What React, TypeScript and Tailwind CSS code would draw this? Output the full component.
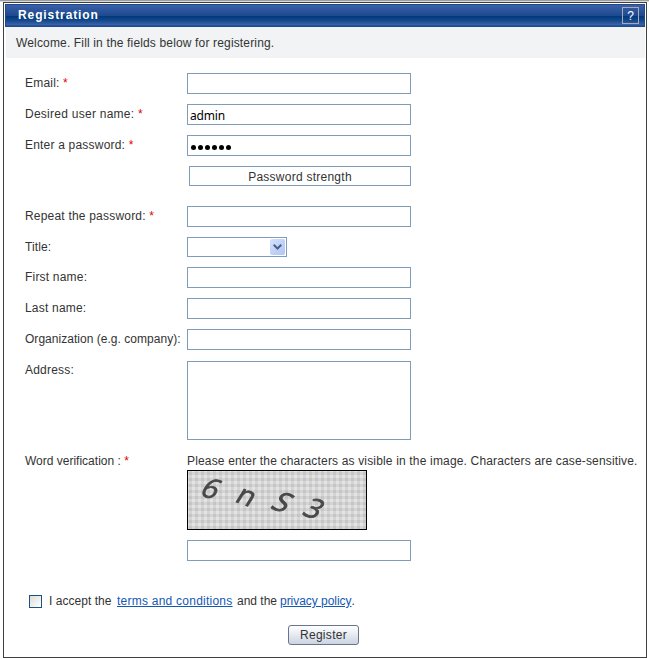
import type { ReactNode } from "react";

function Row({ label, required, height, tracking, children }: {
  label: string;
  required?: boolean;
  height: string;
  tracking: string;
  children?: ReactNode;
}) {
  return (
    <div className={`flex items-start ${height}`}>
      <div className={`w-[162px] shrink-0 whitespace-nowrap pt-[3px] leading-[14px] ${tracking}`}>
        {label}
        {required && <span className="text-[#e60000]"> *</span>}
      </div>
      {children}
    </div>
  );
}

const box = "h-[21px] w-[224px] shrink-0 border border-[#7f9db9] bg-white";

function Field() {
  return <div className={box} />;
}

function Captcha() {
  return (
    <svg width="180" height="60" viewBox="0 0 180 60" className="block shrink-0 overflow-visible">
      <defs>
        <pattern id="weave" width="6" height="6" patternUnits="userSpaceOnUse">
          <rect width="6" height="6" fill="#e4e4e4" />
          <rect x="2" width="3" height="6" fill="#000" opacity="0.07" />
          <rect y="2" width="6" height="3" fill="#000" opacity="0.07" />
        </pattern>
        <filter id="soft" x="-20%" y="-20%" width="140%" height="140%">
          <feGaussianBlur stdDeviation="0.6" />
        </filter>
      </defs>
      <rect x="0.5" y="0.5" width="179" height="59" fill="url(#weave)" stroke="#000" />
      <g fill="#484848" stroke="#484848" strokeWidth="0.8" fontFamily="'Open Sans', sans-serif" fontSize="28" textAnchor="middle" filter="url(#soft)">
        <text transform="translate(24.5 18.6) rotate(18) skewX(-14)" y="10">6</text>
        <text transform="translate(59 27.5) rotate(20) skewX(-12)" y="7.6">n</text>
        <text transform="translate(96 32) rotate(20) skewX(-18)" y="10">S</text>
        <text transform="translate(127.5 38.5) rotate(20) skewX(-15)" y="10">3</text>
      </g>
    </svg>
  );
}

export default function App() {
  return (
    <div className="h-[659px] w-[649px] overflow-hidden bg-white font-['Liberation_Sans',Arial,sans-serif] text-[12px] text-[#333]">
      <div className="h-px bg-[#9c9fa8]" />
      <div className="h-px bg-[#dcdcdc]" />
      <div className="ml-[3px] h-[656px] w-[644px] border border-[#404040] p-px">
        <div className="flex h-[23px] items-center justify-between border border-[#1d4a8c] bg-[linear-gradient(to_bottom,#3c60a8_0%,#1d4a8f_50%,#003a7c_55%,#164a8d_75%,#3a62ab_94%,#164a8d_100%)] pl-[12px] pr-[5px]">
          <h1 className="pb-[2px] text-[12px] font-bold leading-[14px] tracking-[0.9px] text-white">Registration</h1>
          <div className="flex h-[17px] w-[17px] items-center justify-center border border-[#a9a9b5] text-[12px] text-white">?</div>
        </div>
        <div className="ml-px h-[31px] bg-[#f1f3f5] pl-[10px] pt-[9px] leading-[14px] tracking-[0.155px]">
          Welcome. Fill in the fields below for registering.
        </div>

        <div className="pl-[20px] pt-[15px]">
          <Row label="Email:" required height="h-[31px]" tracking="tracking-[0.2px]"><Field /></Row>
          <Row label="Desired user name:" required height="h-[31px]" tracking="tracking-[0.26px]">
            <div className={`${box} pl-[2px] pt-[3px] font-['Noto_Sans',sans-serif] text-[12px] leading-[15px] tracking-[-0.2px] text-black`}>admin</div>
          </Row>
          <Row label="Enter a password:" required height="h-[31px]" tracking="tracking-[0.2px]">
            <div className={`${box} flex items-center gap-[2px] pl-[3px] pt-[4px]`}>
              {[0, 1, 2, 3, 4, 5].map((i) => (
                <span key={i} className="h-[5px] w-[5px] rounded-full bg-black" />
              ))}
            </div>
          </Row>
          <div className="h-[40px] pl-[164px]">
            <div className="h-[20px] w-[222px] border border-[#7f9db9] pt-[3px] text-center leading-[14px] tracking-[0.25px]">Password strength</div>
          </div>
          <Row label="Repeat the password:" required height="h-[31px]" tracking="tracking-[0.2px]"><Field /></Row>
          <Row label="Title:" height="h-[30px]" tracking="tracking-[0.1px]">
            <div className="flex h-[20px] w-[100px] justify-end border border-[#7f9db9] p-px">
              <div className="flex h-[16px] w-[15px] items-center justify-center rounded-[2px] bg-linear-to-br from-[#d5e1fd] to-[#afc5f5]">
                <svg width="9" height="6" viewBox="0 0 9 6" fill="none" stroke="#4d6185" strokeWidth="2">
                  <path d="M.7.7 4.5 4.5 8.3.7" />
                </svg>
              </div>
            </div>
          </Row>
          <Row label="First name:" height="h-[31px]" tracking="tracking-[0.2px]"><Field /></Row>
          <Row label="Last name:" height="h-[31px]" tracking="tracking-[0.2px]"><Field /></Row>
          <Row label="Organization (e.g. company):" height="h-[31px]" tracking="tracking-[0.03px]"><Field /></Row>
          <Row label="Address:" height="h-[91px]" tracking="tracking-[0.2px]">
            <div className="mt-px h-[79px] w-[224px] border border-[#7f9db9]" />
          </Row>
          <Row label="Word verification :" required height="h-[89px]" tracking="tracking-normal">
            <div>
              <div className="h-[19px] whitespace-nowrap pt-[3px] leading-[14px] tracking-[0.165px]">Please enter the characters as visible in the image. Characters are case-sensitive.</div>
              <Captcha />
            </div>
          </Row>
          <div className="pl-[162px]"><Field /></div>
        </div>

        <div className="mt-[33px] flex h-[14px] items-center whitespace-nowrap pl-[24px]">
          <div className="h-[13px] w-[13px] border border-[#1d5180] bg-linear-to-br from-[#dcdcd7] to-white" />
          <div className="ml-[7px] w-[68px] leading-[14px] tracking-[0.03px]">I accept the</div>
          <a className="w-[120px] leading-[14px] tracking-[0.24px] text-[#1358b5] underline">terms and conditions</a>
          <div className="w-[43px] leading-[14px] tracking-[0px]">and the</div>
          <a className="leading-[14px] tracking-[-0.04px] text-[#1358b5] underline">privacy policy</a>
          <div className="leading-[14px]">.</div>
        </div>

        <div className="mt-[17px] pl-[283px]">
          <button className="block h-[20px] w-[71px] rounded-[3px] border border-[#6a748c] bg-linear-to-b from-white to-[#ccd4e2] text-[12px] leading-[14px] tracking-[0.3px]">Register</button>
        </div>
      </div>
    </div>
  );
}
